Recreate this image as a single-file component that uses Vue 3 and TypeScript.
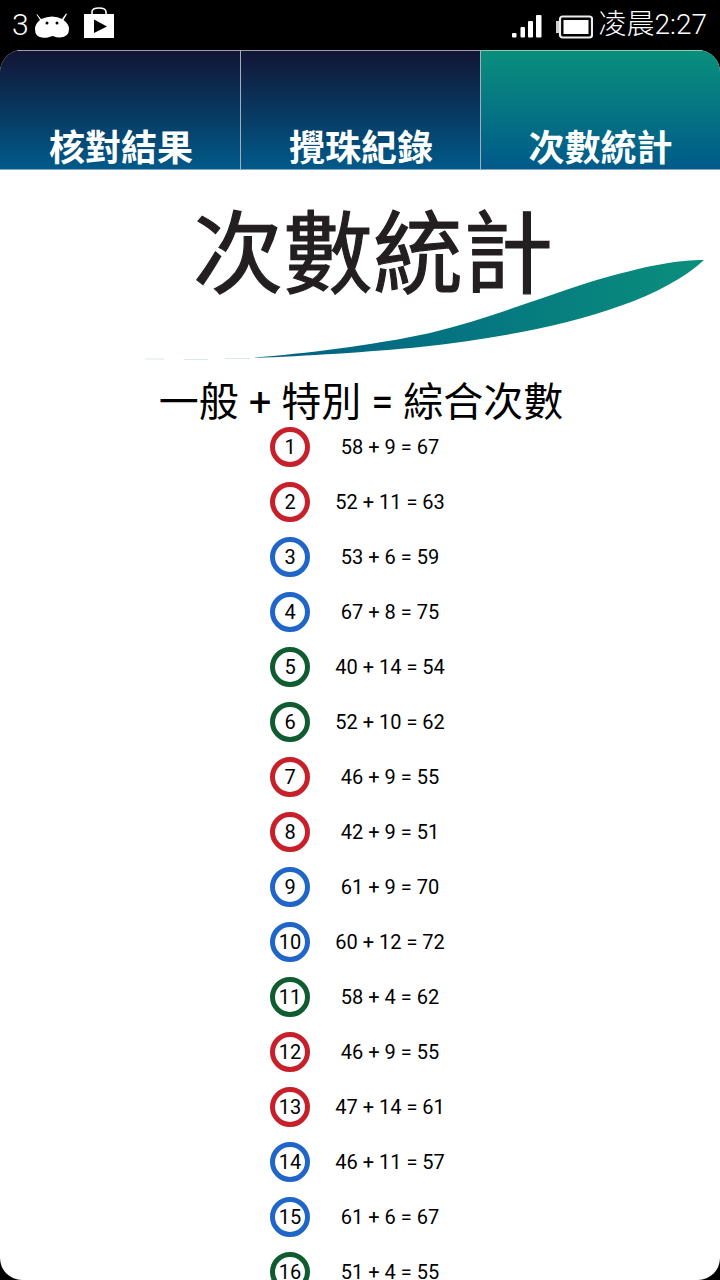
<script setup lang="ts">
interface Row { n: number; a: number; b: number; c: string }
const tabs = [
  { label: '核對結果', active: false },
  { label: '攪珠紀錄', active: false },
  { label: '次數統計', active: true },
]
const raw: [number, number, string][] = [
  [58, 9, 'r'], [52, 11, 'r'], [53, 6, 'b'], [67, 8, 'b'],
  [40, 14, 'g'], [52, 10, 'g'], [46, 9, 'r'], [42, 9, 'r'],
  [61, 9, 'b'], [60, 12, 'b'], [58, 4, 'g'], [46, 9, 'r'],
  [47, 14, 'r'], [46, 11, 'b'], [61, 6, 'b'], [51, 4, 'g'],
]
const rows: Row[] = raw.map((r, i) => ({ n: i + 1, a: r[0], b: r[1], c: r[2] }))
</script>

<template>
  <div class="phone">
    <header class="status">
      <div class="left">
        <span class="count">3</span>
        <svg class="android" width="36" height="26" viewBox="0 0 36 26">
          <path d="M3 1 L7 6 Q13 3.5 18 3.5 Q24 3.5 28 6 L32 0.5 L33 1 L29.5 7 Q35 11 35 16 Q35 24 26 24.5 Q22 24.5 19 23 Q17 23 14 24.5 Q10 25 8 24.5 Q1 24 1 16 Q1 11 6 7 L2.5 1.5 Z" fill="#fff" />
          <circle cx="13" cy="10" r="1.5" fill="#000" />
          <circle cx="23" cy="10" r="1.5" fill="#000" />
        </svg>
        <svg class="play" width="32" height="32" viewBox="0 0 32 32">
          <path d="M9 8 V5 Q9 1 16 1 Q23 1 23 5 V8" fill="none" stroke="#fff" stroke-width="1.6" />
          <rect x="1" y="7" width="30" height="24" fill="#fff" />
          <path d="M11 12.5 L24 19.5 L11 26 Z" fill="#000" />
        </svg>
      </div>
      <div class="right">
        <svg class="signal" width="30" height="24" viewBox="0 0 30 24">
          <rect x="0" y="19" width="4.5" height="4.5" rx="1" fill="#fff" />
          <rect x="8.5" y="13" width="4.5" height="10.5" rx="1" fill="#fff" />
          <rect x="16" y="7" width="5" height="16.5" rx="1" fill="#fff" />
          <rect x="24" y="1" width="5.5" height="22.5" rx="1" fill="#fff" />
        </svg>
        <svg class="battery" width="37" height="24" viewBox="0 0 37 24">
          <rect x="0" y="6" width="3" height="12" fill="#cfcfcf" />
          <rect x="4" y="1.5" width="32" height="21" rx="2.5" fill="none" stroke="#eee" stroke-width="2.2" />
          <rect x="7.5" y="5" width="25" height="14" fill="#fff" />
        </svg>
        <span class="clock">凌晨2:27</span>
      </div>
    </header>

    <main class="screen">
      <nav class="tabs">
        <div v-for="t in tabs" :key="t.label" class="tab" :class="{ active: t.active }">{{ t.label }}</div>
      </nav>

      <section class="hero">
        <h1 class="title">次數統計</h1>
        <svg class="swoosh" width="570" height="115" viewBox="140 250 570 115">
          <defs>
            <linearGradient id="sw" gradientUnits="userSpaceOnUse" x1="250" y1="0" x2="704" y2="0">
              <stop offset="0" stop-color="#005e85" />
              <stop offset="1" stop-color="#0a8f7c" />
            </linearGradient>
          </defs>
          <path d="M704 260 C680 260 650 264 587 283 C540 298 490 318 430 333 C370 346 300 354 250 358 C300 356.5 370 352 420 347 C530 335 650 310 704 260 Z" fill="url(#sw)" />
          <path d="M145 359 H164 M184 359.5 H208 M225 358.5 H250" stroke="#dbe8ed" stroke-width="1" fill="none" />
        </svg>
      </section>

      <h2 class="subtitle">一般 + 特別 = 綜合次數</h2>

      <ul class="list">
        <li v-for="r in rows" :key="r.n" class="row">
          <span class="ball" :class="r.c">{{ r.n }}</span>
          <span class="sum">{{ r.a }} + {{ r.b }} = {{ r.a + r.b }}</span>
        </li>
      </ul>
    </main>
  </div>
</template>

<style>
html, body { margin: 0; background: #000; }
</style>

<style scoped>
.phone {
  width: 720px;
  height: 1280px;
  background: #000;
  overflow: hidden;
  font-family: Roboto, "Noto Sans CJK SC", "Noto Sans CJK TC", sans-serif;
}
.status {
  height: 50px;
  display: flex;
  justify-content: space-between;
  align-items: center;
  padding: 0 13px 0 12px;
  color: #fff;
}
.left, .right { display: flex; align-items: center; }
.count { font-size: 30px; font-weight: 300; color: #fff; line-height: 52px; }
.android { margin-left: 5px; margin-top: 2px; }
.play { margin-left: 13px; margin-top: -4px; }
.signal { margin-right: 14px; margin-top: 2px; }
.battery { margin-right: 6px; margin-top: 4px; }
.clock { font-size: 28px; font-weight: 300; color: #fff; line-height: 52px; }

.screen {
  height: 1230px;
  background: #fff;
  border-radius: 22px;
  overflow: hidden;
}
.tabs { display: flex; height: 120px; }
.tab {
  flex: 0 0 240px;
  box-sizing: border-box;
  display: flex;
  align-items: flex-end;
  justify-content: center;
  padding-left: 2px;
  font-size: 36px;
  font-weight: 700;
  line-height: 40px;
  color: #fff;
  background: linear-gradient(#121535, #005a8a);
  border-top: 1px solid #9aa0b0;
  border-bottom: 1px solid #7fa8c0;
}
.tab + .tab { border-left: 1px solid #a4adbc; padding-left: 1px; }
.tab.active {
  padding-left: 0;
  background: linear-gradient(#0a8f7c, #005a8a);
  border-top-color: #8cc8bc;
}
.hero { position: relative; height: 190px; }
.title {
  margin: 0;
  padding-top: 26px;
  width: 746px;
  text-align: center;
  font-size: 90px;
  line-height: 120px;
  font-weight: 400;
  -webkit-text-stroke: 1.2px #231f20;
  color: #231f20;
}
.swoosh { position: absolute; left: 140px; top: 80px; }
.subtitle {
  margin: 15px 0 0;
  height: 56px;
  width: 722px;
  text-align: center;
  font-size: 40px;
  line-height: 56px;
  font-weight: 400;
  color: #000;
}
.list {
  list-style: none;
  margin: -4px 0 0;
  padding: 0 0 0 270px;
  display: flex;
  flex-direction: column;
  gap: 15px;
}
.row { display: flex; align-items: center; height: 40px; }
.ball {
  box-sizing: border-box;
  width: 40px;
  height: 40px;
  flex: none;
  border-radius: 50%;
  border: 5px solid;
  display: flex;
  align-items: center;
  justify-content: center;
  font-size: 20px;
  color: #000;
}
.ball.r { border-color: #c8202a; }
.ball.b { border-color: #2065c8; }
.ball.g { border-color: #0f5c30; }
.sum {
  width: 160px;
  text-align: center;
  font-size: 20px;
  color: #000;
}
</style>
